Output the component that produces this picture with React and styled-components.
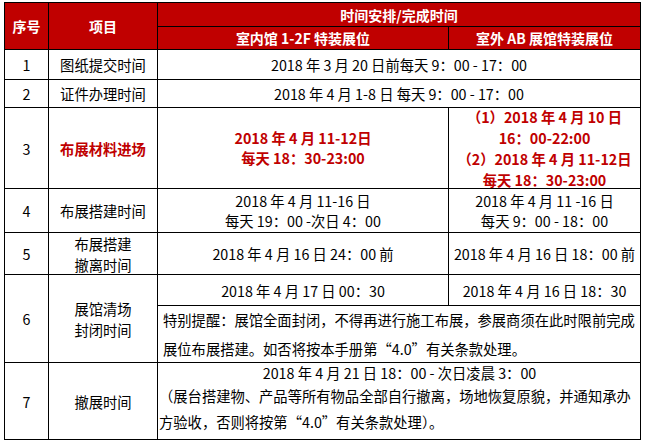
import React from "react";
import styled, { createGlobalStyle } from "styled-components";

const GlobalStyle = createGlobalStyle`
  body {
    margin: 0;
    background: #fff;
    font-family: "Noto Sans CJK SC", "Noto Sans", sans-serif;
  }
`;

const Page = styled.div`
  padding: 2px 0 0 4px;
`;

const Sheet = styled.div`
  display: grid;
  width: 637px;
  box-sizing: border-box;
  padding: 1px;
  gap: 1px;
  background: #000;
  grid-template-columns: 43px 108px 290px 191px;
  grid-template-rows: 23px 22px 29px 27px 80px 43px 41px 30px 56px 76px;
`;

const Cell = styled.div`
  grid-column: ${(p) => p.$col};
  grid-row: ${(p) => p.$row};
  display: flex;
  flex-direction: column;
  justify-content: ${(p) => (p.$top ? "flex-start" : "center")};
  align-items: ${(p) => (p.$left ? "flex-start" : "center")};
  padding-left: ${(p) => p.$pad || 0}px;
  background: ${(p) => (p.$head ? "#c00000" : "#fff")};
  color: ${(p) => (p.$head ? "#fff" : p.$red ? "#c00000" : "#000")};
  font-weight: ${(p) => (p.$head || p.$red ? 700 : 400)};
  font-size: ${(p) => (p.$head ? "14px" : "14.3px")};
  text-align: center;
  white-space: nowrap;
  overflow: visible;
`;

const Line = styled.div`
  line-height: ${(p) => p.$lh || 20}px;
  align-self: ${(p) => (p.$center ? "center" : "auto")};
`;

const rows = [
  { n: "1", item: "图纸提交时间", r: "3", both: ["2018 年 3 月 20 日前每天 9：00 - 17：00"] },
  { n: "2", item: "证件办理时间", r: "4", both: ["2018 年 4 月 1-8 日 每天 9：00 - 17：00"] },
  {
    n: "3",
    item: "布展材料进场",
    r: "5",
    red: true,
    inner: ["2018 年 4 月 11-12日", "每天 18：30-23:00"],
    outer: ["（1）2018 年 4 月 10 日", "16：00-22:00", "（2）2018 年 4 月 11-12日", "每天 18：30-23:00"],
    lh: 21,
  },
  {
    n: "4",
    item: "布展搭建时间",
    r: "6",
    inner: ["2018 年 4 月 11-16 日", "每天 19：00 -次日 4：00"],
    outer: ["2018 年 4 月 11 -16 日", "每天 9：00 - 18：00"],
  },
  {
    n: "5",
    item: ["布展搭建", "撤离时间"],
    r: "7",
    inner: ["2018 年 4 月 16 日 24：00 前"],
    outer: ["2018 年 4 月 16 日 18：00 前"],
  },
];

function Lines({ list, lh }) {
  return list.map((t, i) => (
    <Line key={i} $lh={lh}>
      {t}
    </Line>
  ));
}

export default function App() {
  return (
    <Page>
      <GlobalStyle />
      <Sheet>
        <Cell $head $col="1" $row="1 / 3">序号</Cell>
        <Cell $head $col="2" $row="1 / 3">项目</Cell>
        <Cell $head $col="3 / 5" $row="1">时间安排/完成时间</Cell>
        <Cell $head $col="3" $row="2">室内馆 1-2F 特装展位</Cell>
        <Cell $head $col="4" $row="2">室外 AB 展馆特装展位</Cell>

        {rows.map((row) => (
          <React.Fragment key={row.n}>
            <Cell $col="1" $row={row.r}>{row.n}</Cell>
            <Cell $col="2" $row={row.r} $red={row.red}>
              <Lines list={[].concat(row.item)} lh={21} />
            </Cell>
            {row.both ? (
              <Cell $col="3 / 5" $row={row.r}>
                <Lines list={row.both} />
              </Cell>
            ) : (
              <>
                <Cell $col="3" $row={row.r} $red={row.red}>
                  <Lines list={row.inner} />
                </Cell>
                <Cell $col="4" $row={row.r} $red={row.red}>
                  <Lines list={row.outer} lh={row.lh} />
                </Cell>
              </>
            )}
          </React.Fragment>
        ))}

        <Cell $col="1" $row="8 / 10">6</Cell>
        <Cell $col="2" $row="8 / 10">
          <Lines list={["展馆清场", "封闭时间"]} lh={21} />
        </Cell>
        <Cell $col="3" $row="8">2018 年 4 月 17 日 00：30</Cell>
        <Cell $col="4" $row="8">2018 年 4 月 16 日 18：30</Cell>
        <Cell $col="3 / 5" $row="9" $left $pad={5}>
          <Lines
            list={[
              "特别提醒：展馆全面封闭，不得再进行施工布展，参展商须在此时限前完成",
              "展位布展搭建。如否将按本手册第“4.0”有关条款处理。",
            ]}
            lh={29}
          />
        </Cell>

        <Cell $col="1" $row="10">7</Cell>
        <Cell $col="2" $row="10">撤展时间</Cell>
        <Cell $col="3 / 5" $row="10" $left $top $pad={1}>
          <Line $center $lh={20}>2018 年 4 月 21 日 18：00 - 次日凌晨 3：00</Line>
          <Line $lh={26}>（展台搭建物、产品等所有物品全部自行撤离，场地恢复原貌，并通知承办</Line>
          <Line $lh={26}>方验收，否则将按第“4.0”有关条款处理）。</Line>
        </Cell>
      </Sheet>
    </Page>
  );
}
